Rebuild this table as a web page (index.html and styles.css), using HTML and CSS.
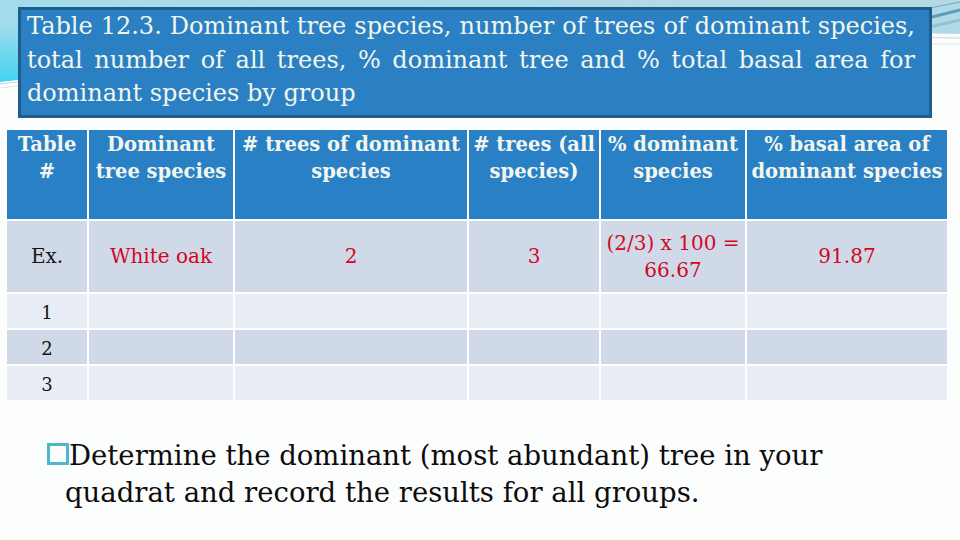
FILE: index.html
```html
<!DOCTYPE html>
<html>
<head>
<meta charset="utf-8">
<link rel="stylesheet" href="styles.css">
</head>
<body>
<div class="slide">
  <svg class="bg" width="960" height="140" viewBox="0 0 960 140" aria-hidden="true">
    <defs>
      <linearGradient id="sw" x1="0" y1="1" x2="1" y2="0">
        <stop offset="0" stop-color="#3fd3ef"/>
        <stop offset="0.35" stop-color="#9fdcec"/>
        <stop offset="1" stop-color="#b5d9e3"/>
      </linearGradient>
    </defs>
    <path d="M0,0 H960 V34 C700,30 300,44 0,82 Z" fill="url(#sw)"/>
    <path d="M0,84 C300,46 700,34 960,38" fill="none" stroke="#c9d3d8" stroke-width="1"/>
    <path d="M0,88 C300,52 700,42 960,44" fill="none" stroke="#dfe6ea" stroke-width="1"/>
    <path d="M900,14 L960,2" fill="none" stroke="#6fa9c9" stroke-width="1"/>
    <path d="M920,20 L960,10" fill="none" stroke="#5a9cc4" stroke-width="3"/>
    <path d="M925,28 L960,20" fill="none" stroke="#8ec3d8" stroke-width="3"/>
  </svg>
  <div class="title">
    <span class="tl just">Table 12.3. Dominant tree species, number of trees of dominant species,</span>
    <span class="tl just">total number of all trees, % dominant tree and % total basal area for</span>
    <span class="tl">dominant species by group</span>
  </div>
  <table class="data">
    <colgroup>
      <col class="c1"><col class="c2"><col class="c3"><col class="c4"><col class="c5"><col class="c6">
    </colgroup>
    <thead>
      <tr class="head">
        <th>Table<br>#</th>
        <th>Dominant<br>tree species</th>
        <th># trees of dominant<br>species</th>
        <th># trees (all<br>species)</th>
        <th>% dominant<br>species</th>
        <th>% basal area of<br>dominant species</th>
      </tr>
    </thead>
    <tbody>
      <tr class="ex dark">
        <td class="dk">Ex.</td>
        <td class="red">White oak</td>
        <td class="red">2</td>
        <td class="red">3</td>
        <td class="red">(2/3) x 100 =<br>66.67</td>
        <td class="red">91.87</td>
      </tr>
      <tr class="row light">
        <td class="dk">1</td><td></td><td></td><td></td><td></td><td></td>
      </tr>
      <tr class="row dark">
        <td class="dk">2</td><td></td><td></td><td></td><td></td><td></td>
      </tr>
      <tr class="row light">
        <td class="dk">3</td><td></td><td></td><td></td><td></td><td></td>
      </tr>
    </tbody>
  </table>
  <p class="note"><span class="bullet"></span>Determine the dominant (most abundant) tree in your<br>quadrat and record the results for all groups.</p>
</div>
</body>
</html>
```

FILE: styles.css
```css
html, body {
  margin: 0;
  padding: 0;
  background: #fcfdfd;
}

.slide {
  position: relative;
  width: 960px;
  height: 540px;
  overflow: hidden;
  background: #fcfdfd;
  font-family: "DejaVu Serif", "Liberation Serif", serif;
  display: flex;
  flex-direction: column;
}

.bg {
  position: absolute;
  top: 0;
  left: 0;
  z-index: 0;
}

.title {
  position: relative;
  z-index: 1;
  box-sizing: border-box;
  width: 914px;
  height: 111px;
  margin: 7px 0 0 18px;
  border: 3px solid #1f5d8c;
  background: #2b80c4;
  color: #f1f6ec;
  padding: 0 14px 0 6px;
  font-size: 24px;
  line-height: 33.5px;
}

.tl {
  display: block;
  white-space: nowrap;
}

.tl.just {
  text-align: justify;
  text-align-last: justify;
  white-space: normal;
}

.data {
  position: relative;
  z-index: 1;
  margin: 10px 0 0 5px;
  border-collapse: separate;
  border-spacing: 2px;
  table-layout: fixed;
  width: 944px;
  background: #ffffff;
}

.c1 { width: 80px; }
.c2 { width: 144px; }
.c3 { width: 232px; }
.c4 { width: 130px; }
.c5 { width: 144px; }
.c6 { width: 200px; }

.data th,
.data td {
  box-sizing: border-box;
  padding: 0;
  text-align: center;
}

.head th {
  height: 89px;
  vertical-align: top;
  padding-top: 1px;
  background: #2a80c4;
  color: #f3f6ee;
  font-weight: bold;
  font-size: 19.5px;
  line-height: 27px;
  white-space: nowrap;
}

.ex td {
  height: 71px;
  vertical-align: middle;
  font-size: 20px;
  line-height: 27px;
}

.row td {
  height: 34px;
  vertical-align: middle;
  font-size: 18px;
  line-height: 22px;
  padding-top: 3px;
}

.dark td { background: #cfd9e8; }
.light td { background: #e8ecf4; }

.red { color: #d3081f; }
.dk { color: #141414; }

.note {
  position: relative;
  z-index: 1;
  margin: 35px 0 0 0;
  padding-left: 65px;
  text-indent: -18px;
  font-size: 27.5px;
  line-height: 37px;
  color: #0c0c0c;
}

.bullet {
  display: inline-block;
  box-sizing: border-box;
  width: 22px;
  height: 22px;
  border: 3px solid #4cb9cb;
  text-indent: 0;
}
```
